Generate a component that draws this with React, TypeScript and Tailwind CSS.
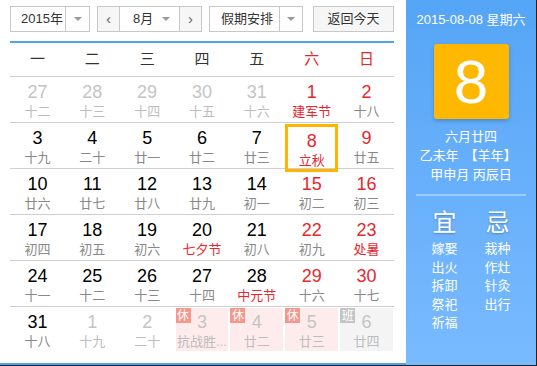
import React from "react";

type Day = {
  n: number;
  lunar: string;
  dim?: boolean;
  red?: boolean;
  fest?: boolean;
  badge?: "休" | "班";
  selected?: boolean;
};

const rows: Day[][] = [
  [
    { n: 27, lunar: "十二", dim: true },
    { n: 28, lunar: "十三", dim: true },
    { n: 29, lunar: "十四", dim: true },
    { n: 30, lunar: "十五", dim: true },
    { n: 31, lunar: "十六", dim: true },
    { n: 1, lunar: "建军节", red: true, fest: true },
    { n: 2, lunar: "十八", red: true },
  ],
  [
    { n: 3, lunar: "十九" },
    { n: 4, lunar: "二十" },
    { n: 5, lunar: "廿一" },
    { n: 6, lunar: "廿二" },
    { n: 7, lunar: "廿三" },
    { n: 8, lunar: "立秋", red: true, fest: true, selected: true },
    { n: 9, lunar: "廿五", red: true },
  ],
  [
    { n: 10, lunar: "廿六" },
    { n: 11, lunar: "廿七" },
    { n: 12, lunar: "廿八" },
    { n: 13, lunar: "廿九" },
    { n: 14, lunar: "初一" },
    { n: 15, lunar: "初二", red: true },
    { n: 16, lunar: "初三", red: true },
  ],
  [
    { n: 17, lunar: "初四" },
    { n: 18, lunar: "初五" },
    { n: 19, lunar: "初六" },
    { n: 20, lunar: "七夕节", fest: true },
    { n: 21, lunar: "初八" },
    { n: 22, lunar: "初九", red: true },
    { n: 23, lunar: "处暑", red: true, fest: true },
  ],
  [
    { n: 24, lunar: "十一" },
    { n: 25, lunar: "十二" },
    { n: 26, lunar: "十三" },
    { n: 27, lunar: "十四" },
    { n: 28, lunar: "中元节", fest: true },
    { n: 29, lunar: "十六", red: true },
    { n: 30, lunar: "十七", red: true },
  ],
  [
    { n: 31, lunar: "十八" },
    { n: 1, lunar: "十九", dim: true },
    { n: 2, lunar: "二十", dim: true },
    { n: 3, lunar: "抗战胜...", dim: true, badge: "休" },
    { n: 4, lunar: "廿二", dim: true, badge: "休" },
    { n: 5, lunar: "廿三", dim: true, badge: "休" },
    { n: 6, lunar: "廿四", dim: true, badge: "班" },
  ],
];

const weekdays = ["一", "二", "三", "四", "五", "六", "日"];
const good = ["嫁娶", "出火", "拆卸", "祭祀", "祈福"];
const bad = ["栽种", "作灶", "针灸", "出行"];

function Caret() {
  return <span className="block h-0 w-0 border-x-[4px] border-t-[4px] border-x-transparent border-t-[#999]" />;
}

function Cell({ d }: { d: Day }) {
  const bg = d.badge === "休" ? "bg-[#fdeceb]" : d.badge === "班" ? "bg-[#f4f4f4]" : "";
  const numColor = d.dim ? "text-[#c4c4c4]" : d.red ? "text-[#e8262f]" : "text-black";
  const lunarColor = d.fest && !d.dim ? "text-[#e8262f]" : d.dim ? "text-[#bdbdbd]" : "text-[#888]";
  return (
    <div
      className={`relative m-[1px] flex flex-col items-center pt-[4px] ${bg} ${
        d.selected ? "border-[3px] border-[#ffb400] pt-[1px]" : ""
      }`}
    >
      {d.badge && (
        <span
          className={`absolute left-0 top-0 flex h-[15px] w-[15px] items-center justify-center text-[12px] leading-none text-white ${
            d.badge === "休" ? "bg-[#f5988c]" : "bg-[#c5c5c5]"
          }`}
        >
          {d.badge}
        </span>
      )}
      <span className={`text-[18px] leading-[20px] ${numColor}`}>{d.n}</span>
      <span className={`mt-[2px] text-[13px] leading-[16px] ${lunarColor}`}>{d.lunar}</span>
    </div>
  );
}

export default function App() {
  return (
    <div
      className="flex h-[366px] w-[537px] border-b border-r border-[#222] bg-white"
      style={{ fontFamily: '"Liberation Sans", "Noto Sans CJK SC", sans-serif' }}
    >
      <div className="w-[406px] shrink-0 border-b-2 border-[#4ea2ef] pl-[10px]">
        <div className="mt-[6px] flex h-[26px] items-stretch text-[13px] text-[#333]">
          <div className="flex w-[80px] border border-[#c8c8c8]">
            <span className="flex flex-1 items-center pl-[10px]">2015年</span>
            <span className="flex w-[24px] items-center justify-center border-l border-[#c8c8c8]">
              <Caret />
            </span>
          </div>
          <div className="ml-[7px] flex w-[105px] border border-[#c8c8c8]">
            <span className="flex w-[22px] items-center justify-center border-r border-[#c8c8c8] bg-[#f6f6f6] text-[15px] text-[#666]">
              ‹
            </span>
            <span className="flex flex-1 items-center justify-between pl-[13px] pr-[9px]">
              8月
              <Caret />
            </span>
            <span className="flex w-[22px] items-center justify-center border-l border-[#c8c8c8] bg-[#f6f6f6] text-[15px] text-[#666]">
              ›
            </span>
          </div>
          <div className="ml-[7px] flex w-[94px] border border-[#c8c8c8]">
            <span className="flex flex-1 items-center pl-[11px]">假期安排</span>
            <span className="flex w-[23px] items-center justify-center border-l border-[#c8c8c8]">
              <Caret />
            </span>
          </div>
          <button className="ml-[10px] flex w-[81px] items-center justify-center border border-[#c8c8c8] bg-[#f6f6f6] text-[13px] text-[#333]">
            返回今天
          </button>
        </div>

        <div className="mt-[9px] w-[384px] border-t-2 border-[#4ea2ef]">
          <div className="grid h-[33px] grid-cols-7 items-center text-[15px]">
            {weekdays.map((w, i) => (
              <span key={w} className={`text-center ${i >= 5 ? "text-[#e8262f]" : "text-[#333]"}`}>
                {w}
              </span>
            ))}
          </div>
          {rows.map((r, i) => (
            <div key={i} className="grid h-[46px] grid-cols-7 border-t border-[#cfcfcf]">
              {r.map((d, j) => (
                <Cell key={j} d={d} />
              ))}
            </div>
          ))}
        </div>
      </div>

      <div className="flex flex-1 flex-col items-center bg-gradient-to-b from-[#55a5f6] to-[#79baff] text-white">
        <div className="mt-[12px] text-[13px] leading-[16px]">2015-08-08 星期六</div>
        <div className="mt-[16px] flex h-[75px] w-[75px] items-center justify-center rounded-[3px] bg-[#ffb800] text-[62px] font-light leading-none shadow-[0_2px_4px_rgba(0,0,0,0.2)]">
          8
        </div>
        <div className="mt-[8px] flex flex-col items-center text-[13px] leading-[19px]">
          <span>六月廿四</span>
          <span>
            乙未年<span className="ml-[6px]">【</span>羊年<span className="mr-[6px]">】</span>
          </span>
          <span>甲申月 丙辰日</span>
        </div>
        <div className="mt-[10px] h-[2px] w-[110px] bg-[#9dcdff]" />
        <div className="mt-[12px] flex gap-[27px]">
          <div className="flex flex-col items-center">
            <span className="text-[24px] leading-[30px] [text-shadow:0_1px_2px_rgba(0,0,0,0.25)]">宜</span>
            <div className="mt-[2px] flex flex-col text-[13px] leading-[18.5px]">
              {good.map((g) => (
                <span key={g}>{g}</span>
              ))}
            </div>
          </div>
          <div className="flex flex-col items-center">
            <span className="text-[24px] leading-[30px] [text-shadow:0_1px_2px_rgba(0,0,0,0.25)]">忌</span>
            <div className="mt-[2px] flex flex-col text-[13px] leading-[18.5px]">
              {bad.map((g) => (
                <span key={g}>{g}</span>
              ))}
            </div>
          </div>
        </div>
      </div>
    </div>
  );
}
